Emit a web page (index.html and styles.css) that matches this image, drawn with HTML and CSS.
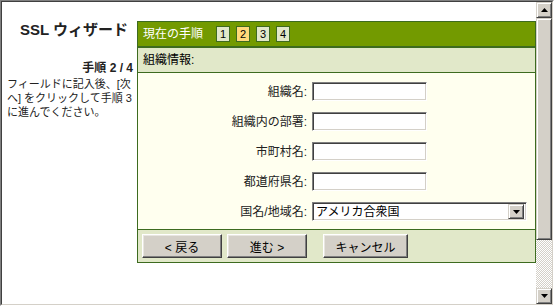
FILE: index.html
```html
<!DOCTYPE html>
<html lang="ja">
<head>
<meta charset="utf-8">
<title>SSL ウィザード</title>
<link rel="stylesheet" href="styles.css">
</head>
<body>
<div class="frame">
  <div class="frame-inner">
    <div class="viewport">
      <aside class="side">
        <h1 class="title">SSL ウィザード</h1>
        <div class="step-count">手順 2 / 4</div>
        <p class="desc">フィールドに記入後、[次<br>へ] をクリックして手順 3<br>に進んでください。</p>
      </aside>
      <section class="panel">
        <header class="panel-head">
          <span class="head-title">現在の手順</span>
          <ol class="steps">
            <li class="step">1</li>
            <li class="step current">2</li>
            <li class="step">3</li>
            <li class="step">4</li>
          </ol>
        </header>
        <div class="section-title">組織情報:</div>
        <div class="form">
          <label class="label" for="org">組織名:</label>
          <input class="field" id="org" type="text">
          <label class="label" for="dept">組織内の部署:</label>
          <input class="field" id="dept" type="text">
          <label class="label" for="city">市町村名:</label>
          <input class="field" id="city" type="text">
          <label class="label" for="pref">都道府県名:</label>
          <input class="field" id="pref" type="text">
          <span class="label">国名/地域名:</span>
          <div class="select">
            <span class="select-value">アメリカ合衆国</span>
            <span class="select-btn"><svg width="7" height="4" viewBox="0 0 7 4"><polygon points="0,0 7,0 3.5,4" fill="#000"/></svg></span>
          </div>
        </div>
        <div class="footer">
          <button class="btn" type="button">&lt; 戻る</button>
          <button class="btn" type="button">進む &gt;</button>
          <button class="btn btn-cancel" type="button">キャンセル</button>
        </div>
      </section>
    </div>
    <div class="scrollbar">
      <span class="sb-btn"><svg width="7" height="4" viewBox="0 0 7 4"><polygon points="3.5,0 7,4 0,4" fill="#000"/></svg></span>
      <span class="sb-thumb"></span>
      <span class="sb-track"></span>
      <span class="sb-btn"><svg width="7" height="4" viewBox="0 0 7 4"><polygon points="0,0 7,0 3.5,4" fill="#000"/></svg></span>
    </div>
  </div>
</div>
</body>
</html>
```

FILE: styles.css
```css
* { box-sizing: border-box; }

html, body {
  margin: 0;
  padding: 0;
  background: #fff;
}

body {
  font-family: "Liberation Sans", "Noto Sans CJK JP", sans-serif;
  font-size: 12px;
  color: #000;
}

.frame {
  width: 554px;
  height: 306px;
  border: 1px solid;
  border-color: #808080 #fff #fff #808080;
}

.frame-inner {
  width: 100%;
  height: 100%;
  border: 1px solid;
  border-color: #404040 #d4d0c8 #d4d0c8 #404040;
  display: flex;
  background: #fff;
}

.viewport {
  flex: 1;
  display: flex;
  align-items: flex-start;
  min-width: 0;
}

/* side column */
.side {
  width: 135px;
  flex: none;
  display: flex;
  flex-direction: column;
  padding-top: 18px;
}

.title {
  margin: 0 9px 0 0;
  font-size: 15px;
  line-height: 20px;
  font-weight: bold;
  text-align: right;
  color: #222;
}

.step-count {
  margin: 21px 4px 0 0;
  font-weight: bold;
  font-size: 12px;
  line-height: 14px;
  text-align: right;
  color: #222;
}

.desc {
  margin: 2px 0 0 5px;
  font-size: 11px;
  line-height: 14px;
  color: #222;
  white-space: nowrap;
}

/* panel */
.panel {
  flex: 1;
  margin-top: 19px;
  border: 1px solid #3d6b1f;
  background: #ffffef;
}

.panel-head {
  height: 26px;
  display: flex;
  align-items: center;
  background: #739a00;
  border-bottom: 2px solid #3d6b1f;
  padding: 0 0 0 5px;
}

.head-title {
  color: #fff;
  font-size: 12px;
  line-height: 14px;
  margin-right: 13px;
}

.steps {
  list-style: none;
  margin: 0;
  padding: 0;
  display: flex;
  gap: 6px;
}

.step {
  width: 14px;
  height: 16px;
  border: 1px solid #3d6b1f;
  background: #e1e8c9;
  font-size: 11px;
  line-height: 14px;
  text-align: center;
  color: #000;
}

.step.current {
  background: #ffd97b;
}

.section-title {
  height: 25px;
  padding: 0 5px;
  line-height: 24px;
  background: #e1e8c9;
  border-bottom: 1px solid #3d6b1f;
  font-size: 12px;
}

.form {
  display: grid;
  grid-template-columns: 169px auto;
  column-gap: 5px;
  row-gap: 11px;
  align-items: center;
  justify-items: start;
  padding: 9px 0 8px;
  border-bottom: 1px solid #3d6b1f;
}

.label {
  justify-self: end;
  font-size: 12px;
  line-height: 14px;
  color: #222;
}

.field,
.select {
  height: 19px;
  border: 1px solid;
  border-color: #808080 #fff #fff #808080;
  box-shadow: inset 1px 1px #404040, inset -1px -1px #d4d0c8;
  background: #fff;
  margin: 0;
  padding: 0;
  font: inherit;
}

.field {
  width: 115px;
}

.select {
  width: 215px;
  display: flex;
  align-items: center;
  padding: 2px;
}

.select-value {
  flex: 1;
  font-size: 12px;
  line-height: 14px;
  padding-left: 1px;
}

.select-btn {
  width: 16px;
  height: 15px;
  background: #d4d0c8;
  border: 1px solid;
  border-color: #d4d0c8 #404040 #404040 #d4d0c8;
  box-shadow: inset 1px 1px #fff, inset -1px -1px #808080;
  display: flex;
  align-items: center;
  justify-content: center;
}

.select-btn svg { display: block; }

.footer {
  display: flex;
  align-items: center;
  padding: 4px 4px;
  background: #e1e8c9;
  height: 32px;
}

.btn {
  width: 80px;
  height: 24px;
  margin: 0 5px 0 0;
  padding: 0;
  background: #d4d0c8;
  border: 1px solid;
  border-color: #fff #404040 #404040 #fff;
  box-shadow: inset -1px -1px #808080, inset 1px 1px #e8e6e0;
  font-family: "Liberation Sans", "Noto Sans CJK JP", sans-serif;
  font-size: 12px;
  color: #000;
}

.btn-cancel {
  width: 85px;
  margin-left: 11px;
}

/* scrollbar */
.scrollbar {
  width: 16px;
  flex: none;
  display: flex;
  flex-direction: column;
  background-color: #fff;
  background-image: repeating-conic-gradient(#d4d0c8 0 25%, #fff 0 50%);
  background-size: 2px 2px;
}

.sb-btn,
.sb-thumb {
  display: flex;
  align-items: center;
  justify-content: center;
  background: #d4d0c8;
  border: 1px solid;
  border-color: #d4d0c8 #404040 #404040 #d4d0c8;
  box-shadow: inset 1px 1px #fff, inset -1px -1px #808080;
}

.sb-btn {
  height: 16px;
  flex: none;
}

.sb-btn svg { display: block; }

.sb-thumb {
  height: 222px;
  flex: none;
}

.sb-track {
  flex: 1;
}
```
